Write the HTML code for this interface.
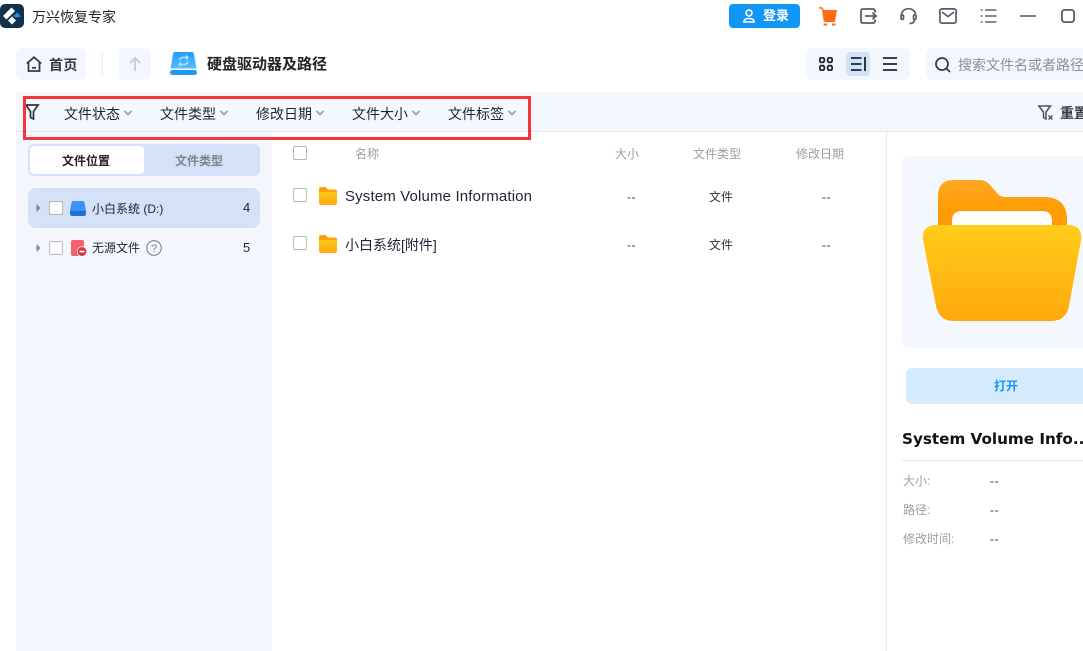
<!DOCTYPE html>
<html><head><meta charset="utf-8">
<style>
html,body{margin:0;padding:0;width:1083px;height:651px;overflow:hidden;background:#fff}
body{position:relative;font-family:"Liberation Sans","Noto Sans CJK SC",sans-serif;color:#1d2433}
.a{position:absolute}
.t{position:absolute;white-space:nowrap;line-height:20px}
svg{position:absolute;overflow:visible}
.cb{position:absolute;width:12px;height:12px;border:1px solid #b4b8bf;border-radius:2px;background:#fff}
.g{color:#9a9ea6;font-size:12px}
.d{letter-spacing:.6px}
</style></head><body>

<!-- title bar -->
<svg style="left:0;top:4px" width="24" height="24" viewBox="0 0 24 24"><rect width="24" height="24" rx="5" fill="#14304a"/><path d="M3 12L11.500 3.500L15 7L6.500 15.500Z" fill="#fff"/><path d="M8 16.500L12 12.500L16 16.500L12 20.500Z" fill="#fff"/><path d="M13 12.500L17 8.500L21 12.500L17 13.500Z" fill="#1296f5"/></svg>
<div class="t" style="left:32px;top:7px;font-size:14px;color:#222">万兴恢复专家</div>

<div class="a" style="left:729px;top:4px;width:71px;height:24px;background:#1296f5;border-radius:4px"></div>
<svg style="left:743px;top:9px" width="12" height="14" viewBox="0 0 12 14" fill="none" stroke="#fff" stroke-width="1.600"><circle cx="6" cy="4" r="3"/><path d="M1 13C1 10 3 9.500 6 9.500S11 10 11 13Z"/></svg>
<div class="t" style="left:763px;top:6px;font-size:13px;font-weight:700;color:#fff">登录</div>

<!-- cart -->
<svg style="left:818px;top:6px" width="20" height="20" viewBox="0 0 20 20"><path d="M1 1.500L4.500 2.500L6.500 15" fill="none" stroke="#ff8a1f" stroke-width="1.800"/><path d="M4.500 4H19L16.800 16H6.500Z" fill="#ff6a13"/><rect x="5.500" y="17.500" width="3.500" height="2" fill="#ff6a13"/><rect x="14" y="17.500" width="3.500" height="2" fill="#ff6a13"/></svg>
<!-- export -->
<svg style="left:860px;top:8px" width="17" height="17" viewBox="0 0 17 17" fill="none" stroke="#555d69" stroke-width="1.800"><path d="M15 4.500V3Q15 1 13 1H3Q1 1 1 3V13Q1 15 3 15H13Q15 15 15 13V11.500"/><path d="M5 8H16M12.500 4.800L16 8L12.500 11.200"/></svg>
<!-- headset -->
<svg style="left:900px;top:8px" width="17" height="17" viewBox="0 0 17 17" fill="none" stroke="#555d69" stroke-width="1.700"><path d="M1.500 7A7 6.300 0 0 1 15.500 7"/><rect x="1" y="7" width="2.500" height="4.500" rx="1.200"/><rect x="13.500" y="7" width="2.500" height="4.500" rx="1.200"/><path d="M14.500 12Q14 15.500 9.500 15.500"/></svg>
<!-- mail -->
<svg style="left:939px;top:8px" width="18" height="16" viewBox="0 0 18 16" fill="none" stroke="#555d69" stroke-width="1.700"><rect x="0.900" y="0.900" width="16.200" height="14.200" rx="2"/><path d="M3 4L9 8.500L15 4"/></svg>
<!-- list -->
<svg style="left:980px;top:9px" width="17" height="14" viewBox="0 0 17 14" stroke="#5f6772" stroke-width="1.500"><path d="M0.500 1H2.500M5 1H16.500M0.500 7H2.500M5 7H16.500M0.500 13H2.500M5 13H16.500"/></svg>
<svg style="left:1020px;top:15px" width="16" height="2"><path d="M0 1H16" stroke="#5f6772" stroke-width="1.700"/></svg>
<svg style="left:1061px;top:9px" width="14" height="14" viewBox="0 0 14 14"><rect x="0.900" y="0.900" width="12.200" height="12.200" rx="3" fill="none" stroke="#555d69" stroke-width="1.800"/></svg>

<!-- toolbar -->
<div class="a" style="left:16px;top:48px;width:70px;height:32px;background:#f2f7fe;border-radius:6px"></div>
<svg style="left:26px;top:56px" width="16" height="16" viewBox="0 0 16 16" fill="none" stroke="#343c49" stroke-width="1.800"><path d="M0.800 7.500L8 1.200L15.200 7.500M2.500 6.200V15H13.500V6.200"/><path d="M6 11.800H10"/></svg>
<div class="t" style="left:49px;top:55px;font-size:14px;font-weight:700;color:#333a46;letter-spacing:.4px">首页</div>
<div class="a" style="left:102px;top:52px;width:1px;height:24px;background:#e8ebef"></div>
<div class="a" style="left:119px;top:48px;width:32px;height:32px;background:#f2f7fe;border-radius:6px"></div>
<svg style="left:129px;top:57px" width="12" height="14" viewBox="0 0 12 14" fill="none" stroke="#c3cad6" stroke-width="1.700"><path d="M6 14V1M1 6L6 1L11 6"/></svg>
<svg style="left:170px;top:52px" width="27" height="23" viewBox="0 0 27 23"><defs><linearGradient id="d" x1="0" y1="0" x2="0" y2="1"><stop offset="0" stop-color="#1f9ffa"/><stop offset="1" stop-color="#58bdff"/></linearGradient></defs><path d="M5 0H22Q23.500 0 24 2L26.500 16.500H.5L3 2Q3.500 0 5 0Z" fill="url(#d)"/><rect y="18" width="27" height="5" rx="2.500" fill="#1a9bf7"/><path d="M9.500 8.500Q10 5.500 13 5.500H17.500M16 3.500L18 5.500L16 7.500M18 9.500Q17 12.500 14 12.500H9.500M11 10.500L9 12.500L11 14.500" fill="none" stroke="#a9deff" stroke-width="1.600"/></svg>
<div class="t" style="left:207px;top:55px;font-size:15px;font-weight:700;color:#222">硬盘驱动器及路径</div>

<div class="a" style="left:806px;top:48px;width:104px;height:32px;background:#f2f7fe;border-radius:6px"></div>
<div class="a" style="left:846px;top:52px;width:24px;height:24px;background:#d3e1f9;border-radius:4px"></div>
<svg style="left:819px;top:57px" width="14" height="14" viewBox="0 0 14 14" fill="none" stroke="#1d2433" stroke-width="1.800"><rect x="0.900" y="0.900" width="4.400" height="4.400" rx="1.400"/><rect x="8.700" y="0.900" width="4.400" height="4.400" rx="1.400"/><rect x="0.900" y="8.700" width="4.400" height="4.400" rx="1.400"/><rect x="8.700" y="8.700" width="4.400" height="4.400" rx="1.400"/></svg>
<svg style="left:851px;top:57px" width="15" height="14" viewBox="0 0 15 14" stroke="#1d2433" stroke-width="1.800" fill="none"><path d="M0 1H10.500M0 7H10.500M0 13H10.500M14 0V14"/></svg>
<svg style="left:883px;top:57px" width="14" height="14" viewBox="0 0 14 14" stroke="#1d2433" stroke-width="1.800" fill="none"><path d="M0 1H14M0 7H14M0 13H14"/></svg>

<div class="a" style="left:926px;top:48px;width:157px;height:32px;background:#f2f7fe;border-radius:6px 0 0 6px"></div>
<svg style="left:935px;top:57px" width="16" height="16" viewBox="0 0 16 16" fill="none" stroke="#333a46" stroke-width="1.700"><circle cx="7" cy="7" r="6"/><path d="M11.500 11.500L15 15"/></svg>
<div class="t" style="left:958px;top:55px;font-size:14px;color:#8a8f98;width:125px;overflow:hidden">搜索文件名或者路径</div>

<!-- filter bar -->
<div class="a" style="left:16px;top:92px;width:1067px;height:39px;background:#f4f8fe;border-bottom:1px solid #e3e7ee"></div>
<svg style="left:25px;top:104px" width="14" height="16" viewBox="0 0 14 16" fill="none" stroke="#2c3440" stroke-width="1.700"><path d="M0.900 1H13.100L8.500 7.500V15L5.500 13.500V7.500Z"/></svg>
<div class="t" style="left:64px;top:104px;font-size:14px;color:#1d2433">文件状态</div>
<div class="t" style="left:160px;top:104px;font-size:14px;color:#1d2433">文件类型</div>
<div class="t" style="left:256px;top:104px;font-size:14px;color:#1d2433">修改日期</div>
<div class="t" style="left:352px;top:104px;font-size:14px;color:#1d2433">文件大小</div>
<div class="t" style="left:448px;top:104px;font-size:14px;color:#1d2433">文件标签</div>
<svg style="left:0;top:0" width="1083" height="130" fill="none" stroke="#98a0ac" stroke-width="1.800"><path d="M124.500 111L128 114.500L131.500 111M220.500 111L224 114.500L227.500 111M316.500 111L320 114.500L323.500 111M412.500 111L416 114.500L419.500 111M508.500 111L512 114.500L515.500 111"/></svg>
<svg style="left:1038px;top:105px" width="16" height="16" viewBox="0 0 16 16" fill="none" stroke="#4a5360" stroke-width="1.500"><path d="M0.800 1H12.500L8 7V14L5.500 12.500V7Z"/><path d="M10.500 10.500L14.500 14.500M14.500 10.500L10.500 14.500"/></svg>
<div class="t" style="left:1060px;top:103px;font-size:14px;color:#333a46;font-weight:700">重置</div>

<!-- sidebar -->
<div class="a" style="left:16px;top:132px;width:256px;height:519px;background:#f4f8fe"></div>
<div class="a" style="left:28px;top:144px;width:232px;height:32px;background:#d3e1f9;border-radius:6px"></div>
<div class="a" style="left:30px;top:146px;width:114px;height:28px;background:#fff;border-radius:4px"></div>
<div class="t" style="left:62px;top:151px;font-size:12px;font-weight:700;color:#222">文件位置</div>
<div class="t" style="left:175px;top:151px;font-size:12px;font-weight:700;color:#7d838c">文件类型</div>
<div class="a" style="left:28px;top:188px;width:232px;height:40px;background:#d3e1f9;border-radius:8px"></div>
<svg style="left:36px;top:204px" width="5" height="8"><path d="M0.500 0L4.500 4L0.500 8Z" fill="#7d8794"/></svg>
<div class="cb" style="left:49px;top:201px"></div>
<svg style="left:70px;top:201px" width="16" height="15" viewBox="0 0 16 15"><path d="M3.500 0H12.500Q14 0 14.500 1.500L16 10H0L1.500 1.500Q2 0 3.500 0Z" fill="#3b93f7"/><path d="M0 10H16V12.500Q16 15 13.500 15H2.500Q0 15 0 12.500Z" fill="#1f6fd8"/></svg>
<div class="t" style="left:92px;top:199px;font-size:12px;color:#1d2433">小白系统 (D:)</div>
<div class="t" style="left:243px;top:198px;font-size:13px;color:#1d2433">4</div>
<svg style="left:36px;top:244px" width="5" height="8"><path d="M0.500 0L4.500 4L0.500 8Z" fill="#7d8794"/></svg>
<div class="cb" style="left:49px;top:241px"></div>
<svg style="left:71px;top:240px" width="17" height="17" viewBox="0 0 17 17"><rect width="13" height="16" rx="2" fill="#f4606c"/><circle cx="11" cy="11.500" r="5.200" fill="#f4f8fe"/><circle cx="11" cy="11.500" r="4.500" fill="#d8344a"/><rect x="8.500" y="10.700" width="5" height="1.600" fill="#fff"/></svg>
<div class="t" style="left:92px;top:238px;font-size:12px;color:#1d2433">无源文件</div>
<svg style="left:146px;top:240px" width="16" height="16" viewBox="0 0 16 16"><circle cx="8" cy="8" r="7.300" fill="none" stroke="#7d838c" stroke-width="1.100"/><text x="8" y="12" font-size="11" text-anchor="middle" fill="#7d838c" font-family="Liberation Sans">?</text></svg>
<div class="t" style="left:243px;top:238px;font-size:13px;color:#1d2433">5</div>

<!-- list -->
<div class="cb" style="left:293px;top:146px"></div>
<div class="t g" style="left:355px;top:144px">名称</div>
<div class="t g" style="left:615px;top:144px">大小</div>
<div class="t g" style="left:693px;top:144px">文件类型</div>
<div class="t g" style="left:796px;top:144px">修改日期</div>

<div class="cb" style="left:293px;top:188px"></div>
<svg style="left:319px;top:187px" width="18" height="18" viewBox="0 0 18 18"><defs><linearGradient id="f" x1="0" y1="0" x2="0" y2="1"><stop offset="0" stop-color="#ffc81c"/><stop offset="1" stop-color="#ffa90d"/></linearGradient></defs><path d="M0 2Q0 0 2 0H6.500L9 2.500H16Q18 2.500 18 4.500V8H0Z" fill="#ffa00c"/><path d="M0 6Q0 5 1 5H17Q18 5 18 6V16Q18 18 16 18H2Q0 18 0 16Z" fill="url(#f)"/></svg>
<div class="t" style="left:345px;top:188px;font-size:15px;letter-spacing:.15px;color:#1d2433;line-height:18px">System Volume Information</div>
<div class="t d" style="left:627px;top:187px;font-size:12px;color:#333">--</div>
<div class="t" style="left:709px;top:187px;font-size:12px;color:#333">文件</div>
<div class="t d" style="left:822px;top:187px;font-size:12px;color:#333">--</div>

<div class="cb" style="left:293px;top:236px"></div>
<svg style="left:319px;top:235px" width="18" height="18" viewBox="0 0 18 18"><path d="M0 2Q0 0 2 0H6.500L9 2.500H16Q18 2.500 18 4.500V8H0Z" fill="#ffa00c"/><path d="M0 6Q0 5 1 5H17Q18 5 18 6V16Q18 18 16 18H2Q0 18 0 16Z" fill="url(#f)"/></svg>
<div class="t" style="left:345px;top:235px;font-size:14px;color:#1d2433">小白系统[附件]</div>
<div class="t d" style="left:627px;top:235px;font-size:12px;color:#333">--</div>
<div class="t" style="left:709px;top:235px;font-size:12px;color:#333">文件</div>
<div class="t d" style="left:822px;top:235px;font-size:12px;color:#333">--</div>

<!-- right panel -->
<div class="a" style="left:886px;top:132px;width:1px;height:519px;background:#e6e8ec"></div>
<div class="a" style="left:902px;top:156px;width:181px;height:192px;background:#f4f8fe;border-radius:6px 0 0 6px"></div>
<svg style="left:922px;top:180px" width="161" height="142" viewBox="0 0 161 142"><defs>
<linearGradient id="b" x1="0" y1="0" x2="0" y2="1"><stop offset="0" stop-color="#ffa722"/><stop offset=".5" stop-color="#ff9c05"/><stop offset="1" stop-color="#ff9900"/></linearGradient>
<linearGradient id="c" x1="0" y1="0" x2="0" y2="1"><stop offset="0" stop-color="#ffcd1a"/><stop offset="1" stop-color="#ffa80c"/></linearGradient></defs>
<path d="M16 60V16Q16 0 32 0H58Q64 0 68 5L75 13Q78 17 83 17H122Q145 17 145 40V60Z" fill="url(#b)"/>
<path d="M30 60V41Q30 31 40 31H120Q130 31 130 41V60Z" fill="#fff"/>
<path d="M15 45H145Q161 45 159 60L147 126Q144 141 129 141H32Q17 141 14 126L1 60Q-1 45 15 45Z" fill="url(#c)"/></svg>
<div class="a" style="left:906px;top:368px;width:177px;height:36px;background:#d6ebfc;border-radius:6px 0 0 6px"></div>
<div class="t" style="left:994px;top:376px;font-size:12px;font-weight:700;color:#1296f5">打开</div>
<div class="t" style="left:902px;top:429px;font-weight:700;color:#111;font-family:'DejaVu Sans',sans-serif;font-size:15.2px;width:181px;overflow:hidden">System Volume Info...</div>
<div class="a" style="left:902px;top:460px;width:181px;height:1px;background:#e6e8ec"></div>
<div class="t g" style="left:903px;top:471px">大小:</div>
<div class="t d" style="left:990px;top:471px;font-size:12px;color:#333">--</div>
<div class="t g" style="left:903px;top:500px">路径:</div>
<div class="t d" style="left:990px;top:500px;font-size:12px;color:#333">--</div>
<div class="t g" style="left:903px;top:529px">修改时间:</div>
<div class="t d" style="left:990px;top:529px;font-size:12px;color:#333">--</div>

<!-- red highlight -->
<div class="a" style="left:23px;top:96px;width:502px;height:38px;border:3px solid #f5353a;z-index:5"></div>
</body></html>
